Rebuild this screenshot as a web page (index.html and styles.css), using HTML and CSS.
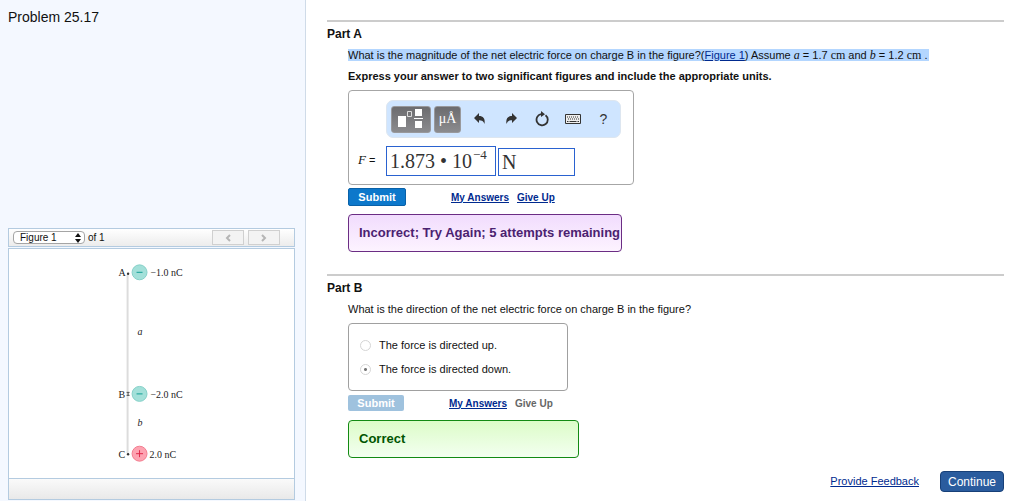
FILE: index.html
```html
<!DOCTYPE html>
<html lang="en">
<head>
    <meta charset="UTF-8">
    <meta name="viewport" content="width=device-width, initial-scale=1.0">
    <title>Problem 25.17</title>
    <link rel="stylesheet" href="styles.css">
</head>
<body>

    <!-- Problem and figure -->
    <aside class="sidebar">
        <h1>Problem 25.17</h1>

        <div class="figure">
            <div class="figure-bar">
                <div class="select-wrap">
                    <select id="figure-select" aria-label="Figure">
                        <option>Figure 1</option>
                    </select>
                    <svg class="select-arrows" width="6" height="10" viewBox="0 0 6 10"><path d="M3 0L6 4H0zM3 10L0 6h6z" fill="#111"/></svg>
                </div>
                <label for="figure-select">of 1</label>
                <div class="figure-nav">
                    <button type="button" aria-label="Previous figure" disabled>
                        <svg width="6" height="8" viewBox="0 0 6 8"><path d="M5 1L2 4l3 3" fill="none" stroke="#b5b5b5" stroke-width="2"/></svg>
                    </button>
                    <button type="button" aria-label="Next figure" disabled>
                        <svg width="6" height="8" viewBox="0 0 6 8"><path d="M1 1l3 3-3 3" fill="none" stroke="#b5b5b5" stroke-width="2"/></svg>
                    </button>
                </div>
            </div>
            <div class="figure-view">
                <svg width="286" height="229" viewBox="0 0 286 229">
                    <path d="M119 25v180" stroke="#dcdcdc" stroke-width="2"/>
                    <circle cx="119.500" cy="24.500" r="1.200" fill="#333"/>
                    <path d="M118 143.500h3M118 146.500h3M119.500 143v4" stroke="#555" stroke-width="1"/>
                    <circle cx="119.500" cy="205.500" r="1.200" fill="#333"/>
                    <g class="negative">
                        <circle cx="131" cy="23" r="7.500"/>
                        <path d="M128 23h6"/>
                        <circle cx="131" cy="145" r="7.500"/>
                        <path d="M128 145h6"/>
                    </g>
                    <g class="positive">
                        <circle cx="131" cy="205" r="7.500"/>
                        <path d="M127.500 205h7M131 201.500v7"/>
                    </g>
                    <g class="labels">
                        <text x="110" y="27">A</text>
                        <text x="142" y="27">−1.0 nC</text>
                        <text x="129" y="86" class="math">a</text>
                        <text x="110" y="149">B</text>
                        <text x="142" y="149">−2.0 nC</text>
                        <text x="129" y="177" class="math">b</text>
                        <text x="110" y="209">C</text>
                        <text x="141" y="209">2.0 nC</text>
                    </g>
                </svg>
            </div>
            <div class="figure-footer"></div>
        </div>
    </aside>

    <main class="content">
        <!-- Part A -->
        <section class="part">
            <h2>Part A</h2>
            <div class="part-body">
                <p><span class="marked">What is the magnitude of the net electric force on charge B in the figure?(<a href="#figure-select">Figure 1</a>) Assume <i class="var">a</i> = 1.7 <span class="unit">cm</span> and <i class="var">b</i> = 1.2 <span class="unit">cm</span> .</span></p>
                <p class="instructions">Express your answer to two significant figures and include the appropriate units.</p>

                <div class="answer-box">
                    <div class="math-toolbar">
                        <button type="button" class="template" aria-label="Templates">
                            <svg width="28" height="22" viewBox="0 0 28 22">
                                <path d="M1 8h8v11H1zM18 1h7v7h-7zM18 13h7v7h-7z" fill="#fff"/>
                                <path d="M10.500 3.500h4v5h-4z" fill="none" stroke="#ddd"/>
                                <path d="M17 10.500h9" stroke="#fff"/>
                            </svg>
                        </button>
                        <button type="button" class="symbols" aria-label="Symbols">μÅ</button>
                        <button type="button" class="tool" aria-label="Undo">
                            <svg width="12" height="12" viewBox="0 0 12 12"><path d="M5 0v3c4 0 6.500 2.500 5.500 8C9.500 8 8 7.200 5 7.200V10L0 5z" fill="#333"/></svg>
                        </button>
                        <button type="button" class="tool" aria-label="Redo">
                            <svg width="12" height="12" viewBox="0 0 12 12"><path d="M7 0v3C3 3 .5 5.500 1.500 11 2.500 8 4 7.200 7 7.200V10l5-5z" fill="#333"/></svg>
                        </button>
                        <button type="button" class="tool" aria-label="Reset">
                            <svg width="14" height="16" viewBox="0 0 14 16"><path d="M10.500 4.200A5.600 5.600 0 1 1 6 3.200" fill="none" stroke="#333" stroke-width="1.800"/><path d="M6 0l4 3.200L6 6z" fill="#333"/></svg>
                        </button>
                        <button type="button" class="tool" aria-label="Keyboard">
                            <svg width="16" height="10" viewBox="0 0 16 10"><path d="M.5.5h15v9H.5z" fill="#eee" stroke="#333"/><path d="M2 3h12M3 5h11" stroke="#333" stroke-width="1.200" stroke-dasharray="1 1"/><path d="M2 7.500h1.500M4.500 7.500h7M12.500 7.500H14" stroke="#333"/></svg>
                        </button>
                        <button type="button" class="tool" aria-label="Help">?</button>
                    </div>
                    <div class="math-row">
                        <label for="unit"><i>F</i> =</label>
                        <div class="math-field value" contenteditable="true" role="textbox" aria-label="Value">1.873 • 10<sup>−4</sup></div>
                        <input class="math-field" type="text" id="unit" value="N">
                    </div>
                </div>

                <div class="actions">
                    <button type="button" class="submit">Submit</button>
                    <a href="#">My Answers</a>
                    <a href="#">Give Up</a>
                </div>
                <div class="feedback incorrect">Incorrect; Try Again; 5 attempts remaining</div>
            </div>
        </section>

        <!-- Part B -->
        <section class="part">
            <h2>Part B</h2>
            <div class="part-body">
                <p>What is the direction of the net electric force on charge B in the figure?</p>
                <div class="choices">
                    <label><input type="radio" name="direction" disabled>The force is directed up.</label>
                    <label><input type="radio" name="direction" checked disabled>The force is directed down.</label>
                </div>
                <div class="actions done">
                    <button type="button" class="submit" disabled>Submit</button>
                    <a href="#">My Answers</a>
                    <span>Give Up</span>
                </div>
                <div class="feedback correct">Correct</div>
            </div>
        </section>

        <div class="page-footer">
            <a href="#">Provide Feedback</a>
            <button type="button" class="continue">Continue</button>
        </div>
    </main>

</body>
</html>
```

FILE: styles.css
```css
* {
    box-sizing: border-box;
}

body {
    display: flex;
    min-height: 100vh;
    margin: 0;
    font-family: "Liberation Sans", Arial, sans-serif;
    font-size: 11px;
    line-height: 13px;
    color: #111;
    background-color: #fff;
}

h1, h2, p {
    margin: 0;
}

button, input, select {
    margin: 0;
    font-family: inherit;
}

a {
    color: #002a8f;
}

.sidebar {
    display: flex;
    flex-direction: column;
    justify-content: space-between;
    flex: 0 0 306px;
    padding: 9px 10px 0 8px;
    background-color: #f4f8ff;
    border-right: 1px solid #cfdbe8;
}

.sidebar h1 {
    font-size: 14px;
    font-weight: normal;
    line-height: 16px;
}

.figure-bar {
    display: flex;
    align-items: center;
    height: 19px;
    margin-bottom: 1px;
    padding: 0 14px 0 4px;
    font-size: 10px;
    background: linear-gradient(#fff, #ececec);
    border: 1px solid #b4cbe0;
}

.select-wrap {
    position: relative;
    display: flex;
    margin-right: 3px;
}

.select-wrap select {
    width: 72px;
    height: 13px;
    padding: 0 6px;
    font-size: 10px;
    line-height: 11px;
    color: #111;
    appearance: none;
    background-color: #fff;
    border: 1px solid #a5a5a5;
    border-radius: 4px;
}

.select-arrows {
    position: absolute;
    top: 2px;
    right: 4px;
    pointer-events: none;
}

.figure-nav {
    display: flex;
    gap: 4px;
    margin-left: auto;
}

.figure-nav button {
    display: flex;
    align-items: center;
    justify-content: center;
    width: 32px;
    height: 15px;
    padding: 0;
    background-color: #f3f3f3;
    border: 1px solid #d0d0d0;
}

.figure-view {
    border: 1px solid #b4cbe0;
    background-color: #fff;
}

.figure-view svg {
    display: block;
    width: 100%;
}

.negative circle {
    fill: #a3e0d9;
    stroke: #86d0c8;
}

.negative path {
    stroke: #12a096;
    stroke-width: 1;
}

.positive circle {
    fill: #fda3b1;
    stroke: #f27d90;
}

.positive path {
    stroke: #e0284a;
    stroke-width: 1;
}

.labels {
    font-family: "Liberation Serif", "Times New Roman", serif;
    font-size: 10px;
    fill: #222;
}

.labels .math {
    font-style: italic;
}

.figure-footer {
    height: 21px;
    margin-bottom: 1px;
    background: linear-gradient(#fafafa, #e9e9e9);
    border: 1px solid #b4cbe0;
    border-top: 0;
}

.content {
    flex: 1;
    padding: 20px 20px 0 21px;
}

.part {
    padding-top: 5px;
    border-top: 2px solid #ccc;
}

.part + .part {
    margin-top: 22px;
}

.part h2 {
    font-size: 12px;
    line-height: 14px;
}

.part-body {
    padding: 8px 0 0 21px;
}

.marked {
    padding-right: 2px;
    background-color: #b3d6ff;
}

.var, .unit {
    font-family: "Liberation Serif", "Times New Roman", serif;
    font-size: 12px;
    line-height: 12px;
}

.instructions {
    padding: 8px 0 7px;
    font-weight: bold;
}

.answer-box {
    width: 286px;
    padding: 9px 12px 8px 9px;
    border: 1px solid #a6a6a6;
    border-radius: 4px;
}

.math-toolbar {
    display: flex;
    align-items: center;
    height: 38px;
    margin-left: 28px;
    padding-left: 4px;
    background-color: #cfe5ff;
    border: 1px solid #dde6f0;
    border-radius: 7px;
}

.math-toolbar button {
    display: flex;
    align-items: center;
    justify-content: center;
    height: 27px;
    padding: 0;
    border: 0;
}

.math-toolbar .template, .math-toolbar .symbols {
    width: 40px;
    margin-right: 3px;
    background: linear-gradient(#6c6c6f, #8b8b8e);
    border: 1px solid #99999c;
    border-radius: 3px;
}

.math-toolbar .symbols {
    width: 27px;
    font-family: "Liberation Serif", "Times New Roman", serif;
    font-size: 14px;
    color: #fff;
}

.math-toolbar .tool {
    width: 31px;
    font-size: 14px;
    color: #333;
    background: none;
}

.math-row {
    display: flex;
    align-items: flex-end;
    gap: 2px;
    margin-top: 8px;
}

.math-row label {
    flex: 0 0 26px;
    padding-bottom: 9px;
    white-space: nowrap;
}

.math-row i {
    font-family: "Liberation Serif", "Times New Roman", serif;
    font-size: 13px;
}

.math-field {
    width: 77px;
    height: 28px;
    padding: 0 3px;
    font-family: "Liberation Serif", "Times New Roman", serif;
    font-size: 20px;
    line-height: 26px;
    color: #333;
    background-color: #fff;
    border: 1px solid #2a62d0;
}

.math-field.value {
    width: 110px;
    height: 30px;
    line-height: 28px;
    white-space: nowrap;
}

.math-field sup {
    margin-left: 1px;
    font-size: 13px;
    line-height: 1px;
    vertical-align: 9px;
}

.actions {
    display: flex;
    align-items: center;
    gap: 8px;
    margin-top: 3px;
    font-size: 10px;
    font-weight: bold;
}

.submit {
    width: 58px;
    height: 18px;
    margin-right: 37px;
    padding: 0;
    font-size: 11px;
    font-weight: bold;
    color: #fff;
    background-color: #0d78cb;
    border: 1px solid #0961a8;
    border-radius: 2px;
}

.actions.done {
    margin-top: 4px;
    color: #666;
}

.done .submit {
    width: 56px;
    height: 16px;
    background-color: #9fc2de;
    border: 0;
}

.feedback {
    width: 274px;
    margin-top: 8px;
    padding: 10px;
    font-size: 13px;
    font-weight: bold;
    line-height: 16px;
    white-space: nowrap;
    border: 1px solid;
    border-radius: 4px;
}

.incorrect {
    color: #4b2270;
    background: linear-gradient(#f1dcfd, #fdf3ff);
    border-color: #6b2d84;
}

.correct {
    width: 231px;
    margin-top: 9px;
    color: #005500;
    background: linear-gradient(#dcfcc8, #f3fff0);
    border-color: #138a13;
}

.choices {
    display: flex;
    flex-direction: column;
    gap: 11px;
    width: 220px;
    margin-top: 7px;
    padding: 15px 11px 14px;
    border: 1px solid #a0a0a0;
    border-radius: 4px;
}

.choices label {
    display: flex;
    align-items: center;
    gap: 8px;
}

.choices input {
    width: 11px;
    height: 11px;
    appearance: none;
    border: 1px solid #d5d5d5;
    border-radius: 50%;
}

.choices input:checked {
    background: radial-gradient(circle, #777 0 1px, #fff 2px);
}

.page-footer {
    display: flex;
    align-items: center;
    justify-content: flex-end;
    gap: 21px;
    margin-top: 13px;
}

.continue {
    width: 64px;
    height: 21px;
    padding: 0;
    font-size: 12px;
    color: #fff;
    background-color: #2a5c9e;
    border: 1px solid #174078;
    border-radius: 4px;
}
```
